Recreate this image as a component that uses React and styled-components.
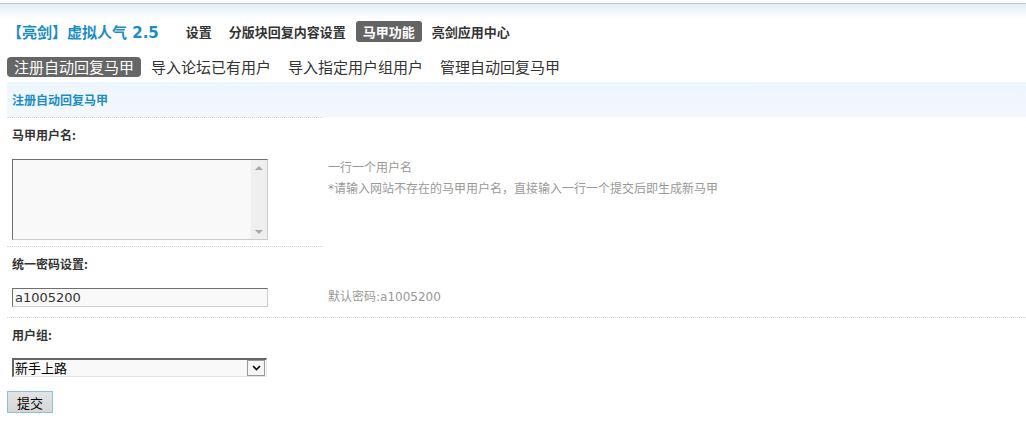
import React from 'react'
import styled, { createGlobalStyle } from 'styled-components'

const GlobalStyle = createGlobalStyle`
  body {
    margin: 0;
    background: #fff;
    font: 12px "DejaVu Sans", "Noto Sans CJK SC", sans-serif;
    color: #333;
  }
`

const TopBar = styled.div`
  margin-top: 3px;
  height: 15px;
  border-top: 1px solid #b9c9d6;
  background: linear-gradient(#e2eef8, #fff);
`

const Page = styled.main`
  padding-left: 7px;
`

const Header = styled.header`
  display: flex;
  align-items: center;
  height: 25px;
`

const Title = styled.h1`
  margin: 0 20px 0 0;
  font-size: 15px;
  font-weight: 700;
  color: #1a8dc6;
  white-space: nowrap;
`

const Nav = styled.nav`
  display: flex;
  gap: 3px;
`

const NavItem = styled.a`
  padding: 2px 7px;
  border-radius: 3px;
  font-size: 13px;
  font-weight: 700;
  line-height: 17px;
  color: ${p => (p.$active ? '#fff' : '#333')};
  background: ${p => (p.$active ? '#646464' : 'transparent')};
  font-family: "Noto Sans CJK SC", sans-serif;
`

const Tabs = styled.div`
  display: flex;
  gap: 3px;
  margin-top: 13px;
`

const Tab = styled.a`
  height: 20px;
  padding: 0 7px;
  border-radius: 4px;
  font-family: "Noto Sans CJK SC", sans-serif;
  font-size: 15px;
  line-height: 20px;
  color: ${p => (p.$active ? '#fff' : '#333')};
  background: ${p => (p.$active ? '#666' : 'transparent')};
`

const Band = styled.div`
  display: flex;
  align-items: center;
  height: 35px;
  margin-top: 5px;
  padding-left: 5px;
  background: linear-gradient(#edf5fd, #f3f8fc);
  font-weight: 700;
  color: #1a8dc6;
  font-family: "Noto Sans CJK SC", sans-serif;
`

const Row = styled.div`
  display: grid;
  grid-template-columns: 316px 1fr;
  border-top: ${p => (p.$divider === 'full' ? '1px dotted #d6d6d6' : 'none')};
`

const Label = styled.div`
  grid-column: 1 / 2;
  padding: 8px 5px;
  line-height: 18px;
  font-weight: 700;
  color: #333;
  font-family: "Noto Sans CJK SC", sans-serif;
  border-top: ${p => (p.$divider === 'left' ? '1px dotted #d6d6d6' : 'none')};
`

const FieldCell = styled.div`
  padding: ${p => p.$pad || '7px 5px 6px'};
`

const Tips = styled.div`
  padding: ${p => p.$pad || '6px 5px'};
  line-height: ${p => p.$lh || '21px'};
  color: #999;
`

const TextBox = styled.div`
  display: flex;
  width: 256px;
  height: 81px;
  box-sizing: border-box;
  border: 1px solid #ccc;
  border-top-color: #6f6f6f;
  border-left-color: #6f6f6f;
  background: #f9f9f9;
`

const TextArea = styled.textarea`
  flex: 1;
  border: 0;
  resize: none;
  background: transparent;
  outline: none;
`

const ScrollTrack = styled.div`
  display: flex;
  flex-direction: column;
  justify-content: space-between;
  align-items: center;
  width: 16px;
  padding: 6px 0 5px;
  background: #efefef;
  border-left: 1px solid #f6f6f6;
`

const Arrow = styled.span`
  width: 0;
  height: 0;
  border-left: 4px solid transparent;
  border-right: 4px solid transparent;
  ${p => (p.$down ? 'border-top: 4px solid #a8a8a8;' : 'border-bottom: 4px solid #a8a8a8;')}
`

const Input = styled.input`
  display: block;
  width: 256px;
  height: 19px;
  box-sizing: border-box;
  padding: 0 2px;
  border: 1px solid #ccc;
  border-top-color: #6f6f6f;
  border-left-color: #6f6f6f;
  background: #f9f9f9;
  font: 13px "DejaVu Sans", sans-serif;
  color: #333;
  outline: none;
`

const SelectBox = styled.div`
  display: flex;
  width: 255px;
  height: 19px;
  box-sizing: border-box;
  border: 2px solid #e2e2e2;
  border-top-color: #666;
  border-left-color: #666;
  border-right-width: 1px;
  border-bottom-width: 1px;
  background: #f9f9f9;
`

const Select = styled.select`
  flex: 1;
  height: 16px;
  appearance: none;
  border: 0;
  padding: 0 1px;
  background: transparent;
  font: 13px/16px "Noto Sans CJK SC", sans-serif;
  color: #000;
  outline: none;
`

const DropButton = styled.span`
  display: flex;
  align-items: center;
  justify-content: center;
  width: 16px;
  margin: 0 1px 0 0;
  border: 1px solid #9a9a9a;
  background: #f6f6f6;
`

const SubmitRow = styled.div`
  padding-top: 14px;
`

const Button = styled.button`
  width: 46px;
  height: 22px;
  padding: 0;
  border: 1px solid #86c3dc;
  background: linear-gradient(#e4e4e4, #d6d6d6);
  font: 13px "Noto Sans CJK SC", sans-serif;
  color: #000;
`

export default function App() {
  return (
    <>
      <GlobalStyle />
      <TopBar />
      <Page>
        <Header>
          <Title>【亮剑】虚拟人气 2.5</Title>
          <Nav>
            <NavItem>设置</NavItem>
            <NavItem>分版块回复内容设置</NavItem>
            <NavItem $active>马甲功能</NavItem>
            <NavItem>亮剑应用中心</NavItem>
          </Nav>
        </Header>

        <Tabs>
          <Tab $active>注册自动回复马甲</Tab>
          <Tab>导入论坛已有用户</Tab>
          <Tab>导入指定用户组用户</Tab>
          <Tab>管理自动回复马甲</Tab>
        </Tabs>

        <Band>注册自动回复马甲</Band>

        <Row>
          <Label $divider="left">马甲用户名:</Label>
        </Row>
        <Row>
          <FieldCell>
            <TextBox>
              <TextArea />
              <ScrollTrack>
                <Arrow />
                <Arrow $down />
              </ScrollTrack>
            </TextBox>
          </FieldCell>
          <Tips>
            <div>一行一个用户名</div>
            <div>*请输入网站不存在的马甲用户名，直接输入一行一个提交后即生成新马甲</div>
          </Tips>
        </Row>

        <Row>
          <Label $divider="left">统一密码设置:</Label>
        </Row>
        <Row>
          <FieldCell $pad="7px 5px 10px">
            <Input defaultValue="a1005200" />
          </FieldCell>
          <Tips $pad="7px 5px" $lh="19px">默认密码:a1005200</Tips>
        </Row>

        <Row $divider="full">
          <Label>用户组:</Label>
        </Row>
        <Row>
          <FieldCell $pad="6px 5px 0">
            <SelectBox>
              <Select defaultValue="1">
                <option value="1">新手上路</option>
              </Select>
              <DropButton>
                <svg width="9" height="6" viewBox="0 0 9 6">
                  <path d="M1 1l3.5 3.5L8 1" fill="none" stroke="#000" strokeWidth="1.6" />
                </svg>
              </DropButton>
            </SelectBox>
          </FieldCell>
        </Row>

        <SubmitRow>
          <Button>提交</Button>
        </SubmitRow>
      </Page>
    </>
  )
}
